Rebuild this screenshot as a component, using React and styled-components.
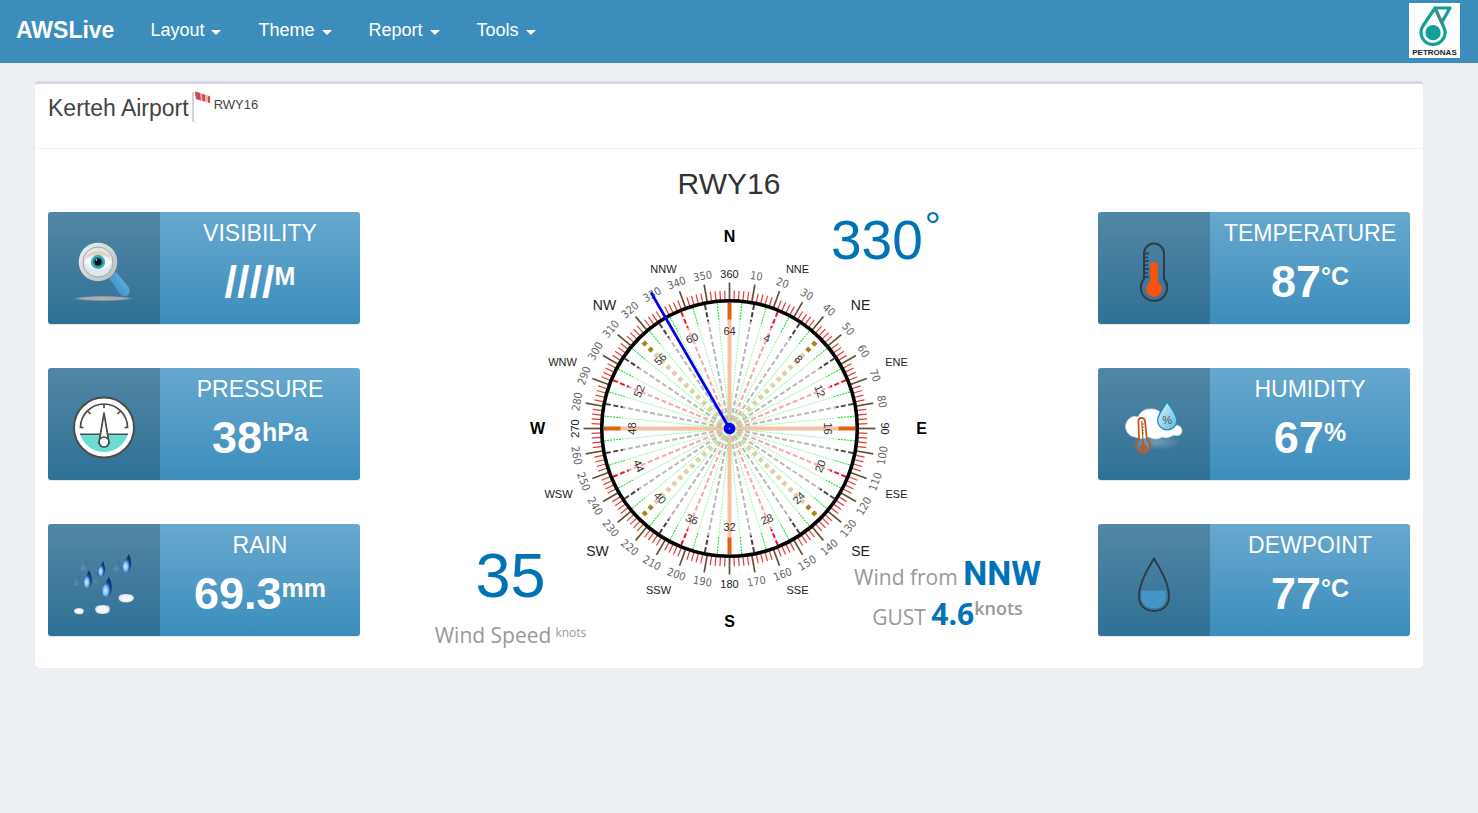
import React from "react";
// styling
import styled, { createGlobalStyle } from "styled-components";

// data
const menus = ["Layout", "Theme", "Report", "Tools"];

const points = [
  { name: "N", x: 0, y: -192, size: 16, bold: true },
  { name: "E", x: 192, y: 0, size: 16, bold: true },
  { name: "S", x: 0, y: 193, size: 16, bold: true },
  { name: "W", x: -192, y: 0, size: 16, bold: true },
  { name: "NE", x: 131, y: -124, size: 14 },
  { name: "SE", x: 131, y: 122, size: 14 },
  { name: "SW", x: -132, y: 122, size: 14 },
  { name: "NW", x: -125, y: -124, size: 14 },
  { name: "NNE", x: 68, y: -159, size: 11 },
  { name: "ENE", x: 167, y: -66, size: 11 },
  { name: "ESE", x: 167, y: 66, size: 11 },
  { name: "SSE", x: 68, y: 162, size: 11 },
  { name: "SSW", x: -71, y: 162, size: 11 },
  { name: "WSW", x: -171, y: 66, size: 11 },
  { name: "WNW", x: -167, y: -66, size: 11 },
  { name: "NNW", x: -66, y: -159, size: 11 },
];

const rays = {
  main: { stroke: "#e2620e", strokeWidth: 4 },
  gold: { stroke: "#a8851a", strokeWidth: 4.6, strokeDasharray: "4.2 4.2" },
  red: { stroke: "#f01020", strokeWidth: 2, strokeDasharray: "5 2.5" },
  grey: { stroke: "#444", strokeWidth: 2, strokeDasharray: "5 2.5" },
  green: { stroke: "#00e01a", strokeWidth: 1, strokeDasharray: "2 1" },
};

const rayKind = (i) => {
  if (i % 16 === 0) return "main";
  if (i % 8 === 0) return "gold";
  if (i % 4 === 0) return "red";
  if (i % 2 === 0) return "grey";
  return "green";
};

// Keeps the numbers readable in the lower half of the dial
const textAngle = (angle) => {
  if (angle > 90 && angle < 270) return angle - 180;
  return angle;
};

const polar = (angle, r) => {
  const rad = (angle * Math.PI) / 180;
  return [r * Math.sin(rad), -r * Math.cos(rad)];
};

const DialText = ({ angle, r, children, ...rest }) => {
  const [x, y] = polar(angle, r);
  return (
    <text
      transform={`translate(${x} ${y}) rotate(${textAngle(angle)})`}
      textAnchor="middle"
      dy="4"
      {...rest}
    >
      {children}
    </text>
  );
};

const Compass = ({ heading }) => {
  const ticks = Array.from({ length: 180 }, (_, i) => i * 2);
  const degrees = Array.from({ length: 36 }, (_, i) => (i + 1) * 10);
  const divisions = Array.from({ length: 64 }, (_, i) => i);
  const labels = Array.from({ length: 16 }, (_, i) => (i + 1) * 4);
  const [nx, ny] = polar(heading, 156);
  return (
    <Dial viewBox="-210.5 -210.5 420 420" role="img" aria-label="Wind compass">
      {ticks.map((a) => (
        <line
          key={a}
          y1="-128"
          y2={a % 10 === 0 ? -146 : -138}
          stroke={a % 10 === 0 ? "#5e5232" : "#e23b3b"}
          strokeWidth={a % 10 === 0 ? 1.7 : 1.2}
          transform={`rotate(${a})`}
        />
      ))}
      {divisions.map((i) => (
        <line
          key={i}
          y1={rayKind(i) === "gold" ? -122 : -126}
          y2="0"
          transform={`rotate(${i * 5.625})`}
          {...rays[rayKind(i)]}
        />
      ))}
      <circle r="109" fill="#fff" opacity="0.62" />
      <circle r="127.8" fill="none" stroke="#000" strokeWidth="3.6" />
      {degrees.map((a) => (
        <DialText
          key={a}
          angle={a}
          r={155}
          fontSize="11"
          fontFamily={
            a % 90 === 0
              ? '"Liberation Sans", sans-serif'
              : '"DejaVu Sans Condensed", "DejaVu Sans", sans-serif'
          }
          fill={a % 90 === 0 ? "#222" : "#666"}
        >
          {a}
        </DialText>
      ))}
      {labels.map((n) => (
        <DialText key={n} angle={n * 5.625} r={98} fontSize="11" fill="#333">
          {n}
        </DialText>
      ))}
      {points.map((p) => (
        <text
          key={p.name}
          x={p.x}
          y={p.y}
          dy={p.size * 0.36}
          fontSize={p.size}
          fontWeight={p.bold ? 700 : 400}
          fill={p.bold ? "#000" : "#222"}
          textAnchor="middle"
        >
          {p.name}
        </text>
      ))}
      <line
        x2={nx}
        y2={ny}
        stroke="#0000ee"
        strokeWidth="2.8"
        strokeLinecap="round"
      />
      <circle r="5.8" fill="#0000ee" />
      <circle r="1" fill="#6a6aff" />
    </Dial>
  );
};

const VisibilityIcon = () => (
  <Icon viewBox="0 0 112 112">
    <defs>
      <linearGradient id="lensRim" x1="0" y1="0" x2="1" y2="1">
        <stop offset="0" stopColor="#f2f2f2" />
        <stop offset="1" stopColor="#b4b8bd" />
      </linearGradient>
      <linearGradient id="lensHandle" x1="0" y1="1" x2="1" y2="0">
        <stop offset="0" stopColor="#2f86c0" />
        <stop offset="1" stopColor="#6fbbe4" />
      </linearGradient>
      <radialGradient id="lensShade">
        <stop offset="0" stopColor="#b5b5b2" />
        <stop offset="0.7" stopColor="#a0a6a8" />
        <stop offset="1" stopColor="#a0a6a8" stopOpacity="0" />
      </radialGradient>
    </defs>
    <ellipse cx="55" cy="86.5" rx="31" ry="2.6" fill="url(#lensShade)" />
    <path d="M61 66 L68 60 L80.5 75 Q83 79 80 83 Q76 86 72 82 Z" fill="url(#lensHandle)" />
    <circle cx="50" cy="50" r="19.3" fill="url(#lensRim)" />
    <circle cx="50" cy="50" r="15" fill="#dfe9ec" stroke="#9fa5aa" strokeWidth="1" />
    <path d="M36 46 Q50 32 64 46 Q50 39 36 46" fill="#e8cfae" />
    <path d="M36 50 Q50 36 64 50 Q50 66 36 50" fill="#f7fafa" />
    <circle cx="50" cy="50" r="7.2" fill="#3fb2c2" />
    <circle cx="50" cy="50" r="5" fill="#1d7f95" />
    <circle cx="50" cy="50" r="3.5" fill="#050d12" />
    <circle cx="48.5" cy="48" r="0.8" fill="#fff" />
  </Icon>
);

const PressureIcon = () => (
  <Icon viewBox="0 0 112 112">
    <circle cx="56" cy="59.5" r="30" fill="#fff" stroke="#4c4c4c" strokeWidth="2" />
    <path d="M32 66 H80 A25 25 0 0 1 32 66 Z" fill="#6cdcd4" />
    <path d="M32 66.3 H80" stroke="#4c4c4c" strokeWidth="1.5" />
    <path
      d="M35.5 59.5 H32.5 A23.5 23.5 0 0 1 79.5 59.5 H76.5 M56 36 V40 M40 43.5 L42.5 46 M72 43.5 L69.5 46"
      fill="none"
      stroke="#4c4c4c"
      strokeWidth="1.7"
    />
    <path d="M56 45 L61 75 H51 Z" fill="#fff" stroke="#4c4c4c" strokeWidth="1.7" strokeLinejoin="round" />
    <circle cx="56" cy="74" r="5" fill="#fff" stroke="#4c4c4c" strokeWidth="1.7" />
  </Icon>
);

const drops = [
  { x: 81, y: 30, cx: 78, cy: 43, r: 4.4 },
  { x: 55, y: 37, cx: 53, cy: 48, r: 3.4 },
  { x: 41, y: 46, cx: 39, cy: 59, r: 4.2 },
  { x: 61, y: 53, cx: 58, cy: 67, r: 5 },
  { x: 38, y: 34, cx: 36, cy: 43, r: 3.2, faded: true },
  { x: 71, y: 35, cx: 69, cy: 44, r: 2.8, faded: true },
  { x: 31, y: 50, cx: 29, cy: 59, r: 2.4, faded: true },
  { x: 50, y: 50, cx: 48, cy: 57, r: 1.6, faded: true },
];

const RainIcon = () => (
  <Icon viewBox="0 0 112 112">
    <defs>
      <radialGradient id="rainDrop" cx="0.42" cy="0.7" r="0.55">
        <stop offset="0" stopColor="#d2f1ff" />
        <stop offset="0.4" stopColor="#7cc0f0" />
        <stop offset="0.75" stopColor="#1c529e" />
        <stop offset="1" stopColor="#0d3272" />
      </radialGradient>
      <linearGradient id="fadedDrop" x1="1" y1="0" x2="0" y2="1">
        <stop offset="0" stopColor="#2d5a84" />
        <stop offset="1" stopColor="#7ba6c6" />
      </linearGradient>
      <radialGradient id="puddle">
        <stop offset="0" stopColor="#fff" />
        <stop offset="0.7" stopColor="#f1f3f7" />
        <stop offset="1" stopColor="#cbd3de" />
      </radialGradient>
    </defs>
    {drops.map((d) => (
      <path
        key={`${d.x} ${d.y}`}
        d={`M${d.x} ${d.y} Q${d.cx + d.r * 1.5} ${d.cy - d.r} ${d.cx + d.r} ${d.cy + 1} A${d.r} ${d.r} 0 1 1 ${d.cx - d.r} ${d.cy} Q${d.cx - d.r * 0.4} ${d.cy - d.r * 1.2} ${d.x} ${d.y}`}
        fill={d.faded ? "url(#fadedDrop)" : "url(#rainDrop)"}
        opacity={d.faded ? 0.6 : 1}
      />
    ))}
    <path d="M27 85 Q31 83 35 85 Q37 88 34 90 Q30 91 27 89 Q25 87 27 85" fill="url(#puddle)" />
    <path d="M49 82 Q55 80 61 82 Q63 86 60 89 Q54 91 49 89 Q45 85 49 82" fill="url(#puddle)" />
    <path d="M72 71 Q78 69 84 71 Q88 74 84 77 Q78 80 72 77 Q69 74 72 71" fill="url(#puddle)" />
  </Icon>
);

const TemperatureIcon = () => (
  <Icon viewBox="0 0 112 112">
    <path
      d="M46 67 V41.5 A10 10 0 0 1 66 41.5 V67 A13.2 13.2 0 1 1 46 67 Z"
      fill="none"
      stroke="#2d3b48"
      strokeWidth="2"
    />
    <path
      d="M47 41.5 H51 M47 45.5 H50 M47 49 H51 M47 53 H50 M47 57 H51 M47 61 H50 M47 65 H51"
      stroke="#2d3b48"
      strokeWidth="1.4"
    />
    <path d="M52.2 50.5 H59.8 V70 A8 8 0 1 1 52.2 70 Z" fill="#f9520d" />
  </Icon>
);

const HumidityIcon = () => (
  <Icon viewBox="0 0 112 112">
    <defs>
      <linearGradient id="humidDrop" x1="0" y1="0" x2="1" y2="1">
        <stop offset="0" stopColor="#e2f5fc" />
        <stop offset="1" stopColor="#58b8e0" />
      </linearGradient>
      <radialGradient id="cloudShade">
        <stop offset="0" stopColor="#8fa9bb" stopOpacity="0.7" />
        <stop offset="1" stopColor="#8fa9bb" stopOpacity="0" />
      </radialGradient>
    </defs>
    <ellipse cx="59" cy="74" rx="24" ry="8" fill="url(#cloudShade)" />
    <path
      d="M37 69 A10.5 10.5 0 0 1 30 52 Q34 47 40 49 Q44 40 54 41 Q62 41 65 49 Q74 47 76 57 Q84 57 84 63 Q83 69 76 67 Q70 71 64 69 Q58 73 51 69 Q44 72 37 69 Z"
      fill="#fff"
      stroke="#d8dde2"
      strokeWidth="0.8"
    />
    <path
      d="M41 72 L40.4 53 Q40.5 50 43.5 50 Q46.6 50 47 53 L49 72 A7 7 0 1 1 41 72 Z"
      fill="#fff"
      fillOpacity="0.1"
      stroke="#c05a1c"
      strokeWidth="1.8"
    />
    <path d="M43.7 53 L45.5 79 M44 56 H46 M44 59 H46 M44 62 H46 M44 65 H46" stroke="#b54c12" strokeWidth="1.1" />
    <circle cx="45.5" cy="79.5" r="3" fill="#c05a1c" />
    <path
      d="M69.2 34 Q79 47 79 52.5 A9.6 9.2 0 0 1 59.6 52.5 Q59.6 47 69.2 34 Z"
      fill="url(#humidDrop)"
      stroke="#1e8bb0"
      strokeWidth="1.3"
    />
    <text x="69.2" y="56" fontSize="11" fill="#555" textAnchor="middle">
      %
    </text>
  </Icon>
);

const DewpointIcon = () => (
  <Icon viewBox="0 0 112 112">
    <path
      d="M43.5 66 q2 1.8 4 0 q2 1.8 4 0 q2 1.8 4 0 q2 1.8 4 0 q2 1.8 4 0 q2 1.8 4 0 Q70.5 84 56 84.5 Q41 84 43.5 66 Z"
      fill="#4795c6"
    />
    <path
      d="M56 34.5 C61 43 71 58 71 73 C71 82 64 87 56 87 C48 87 41 82 41 73 C41 58 51 43 56 34.5 Z"
      fill="none"
      stroke="#2d3b48"
      strokeWidth="1.9"
    />
  </Icon>
);

const leftCards = [
  { title: "VISIBILITY", value: "////", unit: "M", icon: VisibilityIcon },
  { title: "PRESSURE", value: "38", unit: "hPa", icon: PressureIcon },
  { title: "RAIN", value: "69.3", unit: "mm", icon: RainIcon },
];
const rightCards = [
  { title: "TEMPERATURE", value: "87", unit: "°C", icon: TemperatureIcon },
  { title: "HUMIDITY", value: "67", unit: "%", icon: HumidityIcon },
  { title: "DEWPOINT", value: "77", unit: "°C", icon: DewpointIcon },
];

const CardColumn = ({ cards }) => (
  <Cards>
    {cards.map(({ title, value, unit, icon: CardIcon }) => (
      <Card key={title}>
        <IconBox>
          <CardIcon />
        </IconBox>
        <CardContent>
          <h3>{title}</h3>
          <p>
            {value}
            <sup>{unit}</sup>
          </p>
        </CardContent>
      </Card>
    ))}
  </Cards>
);

const Logo = () => (
  <LogoSvg viewBox="0 0 51 55" role="img" aria-label="Petronas">
    <rect width="51" height="55" fill="#fff" />
    <path
      d="M26 5 L13.6 23.5 A12 12 0 1 0 34.8 24.2 L26 5 H41 L33 19"
      fill="none"
      stroke="#12a094"
      strokeWidth="3.2"
      strokeLinejoin="round"
    />
    <path d="M27.5 8 L33.5 21" stroke="#4d7f86" strokeWidth="2.6" />
    <circle cx="24" cy="29.7" r="7.6" fill="#12a094" />
    <text x="25.5" y="52" fontSize="8" fontWeight="700" fill="#222" textAnchor="middle">
      PETRONAS
    </text>
  </LogoSvg>
);

const Windsock = () => (
  <WindsockSvg viewBox="0 0 19 32">
    <path d="M1 1 V31" stroke="#d3d3d6" strokeWidth="2" />
    <path d="M2 31 H4" stroke="#ddd" />
    <path d="M3 0.5 L18 5 V12 L4 8 Z" fill="#e9b0b0" />
    <path d="M3 0.5 L8 2 L9 9.5 L4 8 Z M10 3 L13 4 V10.5 L10.5 10 Z M16 5 L18 5.5 V12 L16 11.5 Z" fill="#cc4a52" />
  </WindsockSvg>
);

const App = () => {
  return (
    <>
      <GlobalStyle />
      <Navbar>
        <Brand href="#">AWSLive</Brand>
        <Menu>
          {menus.map((menu) => (
            <MenuButton key={menu} type="button">
              {menu}
              <Caret />
            </MenuButton>
          ))}
        </Menu>
        <Logo />
      </Navbar>
      <Box>
        <BoxHeader>
          <h1>Kerteh Airport</h1>
          <Windsock />
          <small>RWY16</small>
        </BoxHeader>
        <BoxBody>
          <h2>RWY16</h2>
          <Panels>
            <CardColumn cards={leftCards} />
            <Stage>
              <Compass heading={330} />
              <Direction>
                330<sup>°</sup>
              </Direction>
              <Speed>
                <strong>35</strong>
                <p>
                  Wind Speed<sup>knots</sup>
                </p>
              </Speed>
              <Wind>
                <p>
                  Wind from <b>NNW</b>
                </p>
                <Gust>
                  GUST <b>4.6</b>
                  <sup>knots</sup>
                </Gust>
              </Wind>
            </Stage>
            <CardColumn cards={rightCards} />
          </Panels>
        </BoxBody>
      </Box>
    </>
  );
};

const GlobalStyle = createGlobalStyle`
  * {
    box-sizing: border-box;
    margin: 0;
    padding: 0;
  }
  body {
    background: #ecf0f5;
    color: #333;
    font-family: "Liberation Sans", Arial, sans-serif;
  }
`;
const Navbar = styled.nav`
  display: flex;
  align-items: center;
  min-height: 63px;
  padding: 0 18px 1px 16px;
  background: #3c8dbc;
  border-bottom: 1px solid #4587b2;
`;
const Brand = styled.a`
  color: white;
  font-size: 23px;
  font-weight: bold;
  text-decoration: none;
`;
const Menu = styled.div`
  display: flex;
  flex: 1;
  gap: 37px;
  margin-left: 36px;
`;
const MenuButton = styled.button`
  display: flex;
  align-items: center;
  gap: 7px;
  border: none;
  background: none;
  color: white;
  font-family: inherit;
  font-size: 18px;
  cursor: pointer;
`;
const Caret = styled.span`
  margin-top: 4px;
  border-top: 5px solid white;
  border-left: 5px solid transparent;
  border-right: 5px solid transparent;
`;
const LogoSvg = styled.svg`
  width: 51px;
  height: 55px;
`;
const Box = styled.section`
  margin: 18px 55px 0 35px;
  background: white;
  border-top: 3px solid #d2d6de;
  border-radius: 4px;
  box-shadow: 0 1px 1px rgba(0, 0, 0, 0.1);
`;
const BoxHeader = styled.header`
  display: flex;
  align-items: flex-start;
  height: 65px;
  padding: 7px 13px;
  border-bottom: 1px solid #f4f4f4;
  h1 {
    font-size: 23px;
    font-weight: normal;
    line-height: 34px;
    color: #444;
  }
  small {
    margin-left: 3px;
    font-size: 13px;
    line-height: 28px;
    color: #444;
  }
`;
const WindsockSvg = styled.svg`
  width: 19px;
  height: 32px;
  margin-left: 3px;
`;
const BoxBody = styled.div`
  padding: 18px 13px 0;
  h2 {
    margin-bottom: 11px;
    font-size: 30px;
    font-weight: normal;
    line-height: 34px;
    text-align: center;
  }
`;
const Panels = styled.div`
  display: grid;
  grid-template-columns: 312px 1fr 312px;
`;
const Cards = styled.div`
  display: flex;
  flex-direction: column;
  gap: 44px;
`;
const Card = styled.article`
  display: flex;
  height: 112px;
  border-radius: 3px;
  overflow: hidden;
  background: linear-gradient(to bottom, #67a8ce, #3c8dbc);
  box-shadow: 0 1px 1px rgba(0, 0, 0, 0.1);
`;
const IconBox = styled.div`
  width: 112px;
  background: rgba(0, 0, 0, 0.2);
`;
const Icon = styled.svg`
  display: block;
  width: 112px;
  height: 112px;
`;
const CardContent = styled.div`
  flex: 1;
  padding-top: 6px;
  color: white;
  text-align: center;
  h3 {
    font-size: 23px;
    font-weight: normal;
    line-height: 30px;
  }
  p {
    margin-top: 8px;
    font-size: 45px;
    font-weight: bold;
    line-height: 52px;
  }
  sup {
    font-size: 25px;
    line-height: 0;
    vertical-align: 12px;
  }
`;
const Stage = styled.div`
  display: grid;
  grid-template-columns: 1fr 1fr;
  min-height: 456px;
  font-family: "Open Sans", "Noto Sans", sans-serif;
  color: #999;
`;
const Dial = styled.svg`
  grid-area: 1 / 1 / 2 / 3;
  justify-self: center;
  width: 420px;
  height: 420px;
  margin-top: 6px;
  font-family: "Liberation Sans", sans-serif;
`;
const Direction = styled.p`
  grid-area: 1 / 2;
  align-self: start;
  margin-left: 102px;
  font-family: "Liberation Sans", sans-serif;
  font-size: 55px;
  line-height: 56px;
  color: #0073b7;
  sup {
    margin-left: 2px;
    font-size: 40px;
    line-height: 0;
    vertical-align: 19px;
  }
`;
const Speed = styled.div`
  grid-area: 1 / 1;
  align-self: end;
  margin-right: 68px;
  padding-bottom: 16px;
  text-align: center;
  strong {
    display: block;
    margin-bottom: 8px;
    font-family: "Liberation Sans", sans-serif;
    font-size: 63px;
    font-weight: normal;
    line-height: 70px;
    color: #0073b7;
  }
  p {
    font-size: 21px;
    line-height: 34px;
  }
  sup {
    margin-left: 4px;
    font-size: 12px;
    line-height: 0;
    vertical-align: 6px;
  }
`;
const Wind = styled.div`
  grid-area: 1 / 2;
  align-self: end;
  margin-left: 68px;
  padding-bottom: 31px;
  font-size: 21px;
  line-height: 40px;
  text-align: center;
  b {
    line-height: 0;
    color: #0073b7;
    font-family: Roboto, "Open Sans", sans-serif;
    font-size: 34px;
  }
`;
const Gust = styled.p`
  b {
    font-family: "Open Sans", "Noto Sans", sans-serif;
    font-size: 30px;
  }
  sup {
    font-size: 18px;
    font-weight: 600;
    line-height: 0;
    vertical-align: 10px;
  }
`;

export default App;
